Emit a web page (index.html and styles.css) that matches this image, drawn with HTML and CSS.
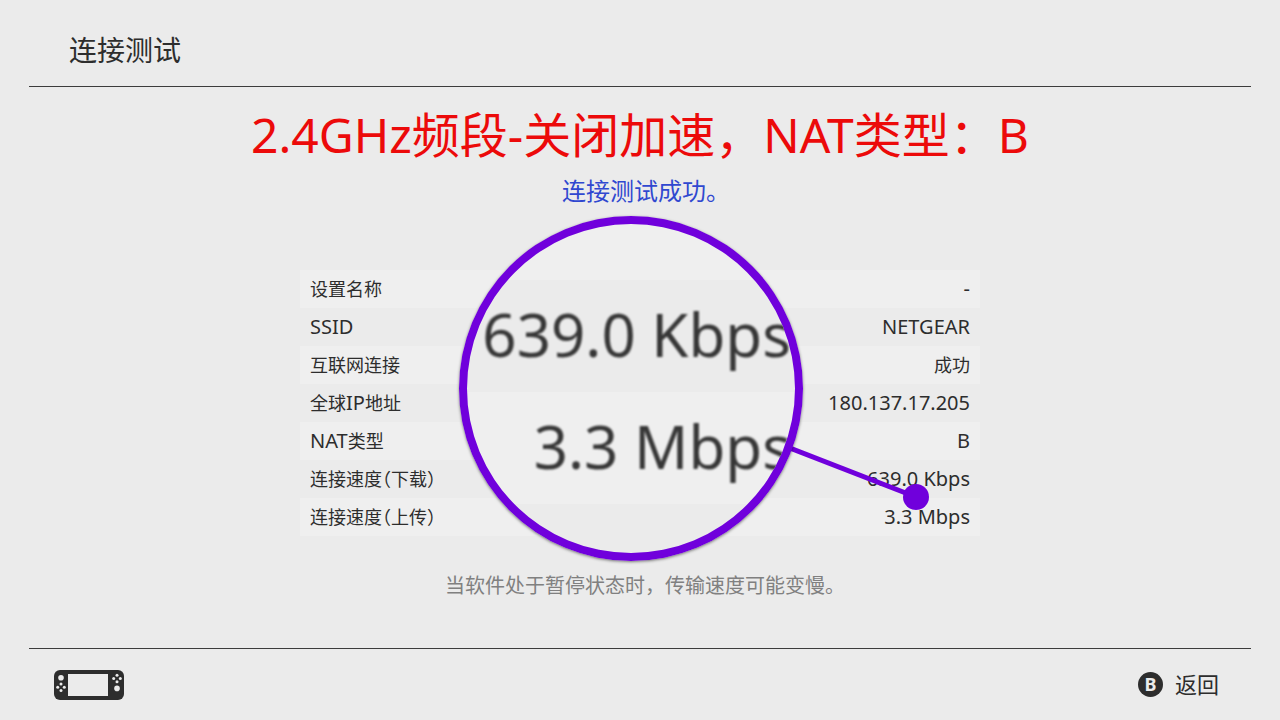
FILE: index.html
```
<!DOCTYPE html>
<html lang="zh-CN">
<head>
    <meta charset="utf-8">
    <meta name="viewport" content="width=device-width, initial-scale=1">
    <title>连接测试</title>
    <link rel="stylesheet" href="styles.css">
</head>
<body>
    <header class="page-header">
        <h1>连接测试</h1>
    </header>

    <main class="page-main">
        <h2 class="caption">2.4GHz频段-关闭加速，NAT类型：B</h2>
        <p class="status">连接测试成功<span class="half">。</span></p>

        <div class="result">
            <table class="result-table">
                <tr><th scope="row">设置名称</th><td>-</td></tr>
                <tr><th scope="row"><span class="latin">SSID</span></th><td>NETGEAR</td></tr>
                <tr><th scope="row">互联网连接</th><td class="cjk">成功</td></tr>
                <tr><th scope="row">全球<span class="latin">IP</span>地址</th><td>180.137.17.205</td></tr>
                <tr><th scope="row"><span class="latin">NAT</span>类型</th><td>B</td></tr>
                <tr><th scope="row">连接速度<span class="half">（</span>下载<span class="half">）</span></th><td>639.0 Kbps</td></tr>
                <tr><th scope="row">连接速度<span class="half">（</span>上传<span class="half">）</span></th><td>3.3 Mbps</td></tr>
            </table>

            <!-- magnifier over the speed rows -->
            <svg class="pointer" width="140" height="70" viewBox="0 0 140 70" aria-hidden="true">
                <path d="M0 8L126 57" stroke="#7000dc" stroke-width="5"/>
                <circle cx="126" cy="57" r="13" fill="#7000dc"/>
            </svg>
            <div class="lens" aria-hidden="true">
                <div class="lens-text">
                    <div>639.0 Kbps</div>
                    <div>3.3 Mbps</div>
                </div>
            </div>
        </div>

        <p class="note">当软件处于暂停状态时，传输速度可能变慢<span class="half">。</span></p>
    </main>

    <footer class="page-footer">
        <svg class="console" width="70" height="30" viewBox="0 0 70 30" role="img" aria-label="Console">
            <rect width="70" height="30" rx="6" fill="#2d2d2d"/>
            <g fill="#ebebeb">
                <rect x="14" y="4" width="40" height="22"/>
                <circle cx="7" cy="7.7" r="2.8"/>
                <circle cx="7" cy="14" r="1.5"/>
                <circle cx="7" cy="20.6" r="1.5"/>
                <circle cx="3.7" cy="17.3" r="1.5"/>
                <circle cx="10.3" cy="17.3" r="1.5"/>
                <circle cx="63" cy="5.2" r="1.5"/>
                <circle cx="63" cy="11.8" r="1.5"/>
                <circle cx="59.7" cy="8.5" r="1.5"/>
                <circle cx="66.3" cy="8.5" r="1.5"/>
                <circle cx="63" cy="18.4" r="2.8"/>
            </g>
        </svg>
        <button type="button" class="back"><span class="key">B</span><span class="back-text">返回</span></button>
    </footer>
</body>
</html>
```
FILE: styles.css
```
* { box-sizing: border-box; }

body {
    margin: 0;
    min-height: 100vh;
    display: flex;
    flex-direction: column;
    background: #ebebeb;
    color: #2d2d2d;
    font-family: "Noto Sans", "Noto Sans CJK SC", sans-serif;
}

h1, h2, p { margin: 0; font-weight: 400; }

.half { font-feature-settings: "halt"; }
.latin { font-size: 20px; }

.page-header { margin: 0 29px; padding: 30px 40px 16px; border-bottom: 1px solid #3c3c3c; }
.page-header h1 { font-size: 28px; line-height: 40px; }

.page-main { flex: 1; display: flex; flex-direction: column; align-items: center; padding: 16px 20px; }
.caption { color: #ec0a0a; font-size: 48px; line-height: 64px; text-align: center; }
.status { color: #3048d0; font-size: 24px; line-height: 40px; margin-top: 4px; }
.note { color: #808080; font-size: 20px; line-height: 40px; margin-top: 30px; }

.result { position: relative; width: 100%; max-width: 680px; margin-top: 59px; }
.result-table { width: 100%; border-collapse: collapse; }
.result-table tr:nth-child(odd) { background: #efefef; }
.result-table th, .result-table td { height: 38px; padding: 0 10px; line-height: 30px; font-weight: 400; }
.result-table th { text-align: left; font-size: 18px; }
.result-table td { text-align: right; font-size: 20px; }
.result-table .cjk { font-size: 18px; }

.lens {
    position: absolute;
    left: 159px;
    top: -54px;
    width: 344px;
    height: 345px;
    border: 8px solid #7000dc;
    border-radius: 50%;
    overflow: hidden;
    background: linear-gradient(#efefef 56px, #ebebeb 56px, #ebebeb 168px, #efefef 168px, #efefef 280px, #ebebeb 280px);
    box-shadow: 0 1px 3px rgba(0, 0, 0, .5);
}
.lens-text {
    padding: 54px 4px 0 0;
    color: #363636;
    font-size: 60px;
    line-height: 112px;
    text-align: right;
    white-space: nowrap;
    filter: blur(1px);
}
.pointer { position: absolute; left: 490px; top: 170px; }

.page-footer {
    margin: 0 29px;
    padding: 0 32px 0 25px;
    height: 72px;
    display: flex;
    justify-content: space-between;
    align-items: center;
    border-top: 1px solid #3c3c3c;
}
.back { display: flex; align-items: center; gap: 12px; padding: 0; border: 0; background: none; color: inherit; font: inherit; cursor: pointer; }
.back-text { font-size: 22px; line-height: 28px; padding-bottom: 2px; }
.key { width: 25px; height: 25px; border-radius: 50%; background: #2d2d2d; color: #ebebeb; font-size: 18px; font-weight: 700; line-height: 25px; text-align: center; }
```
